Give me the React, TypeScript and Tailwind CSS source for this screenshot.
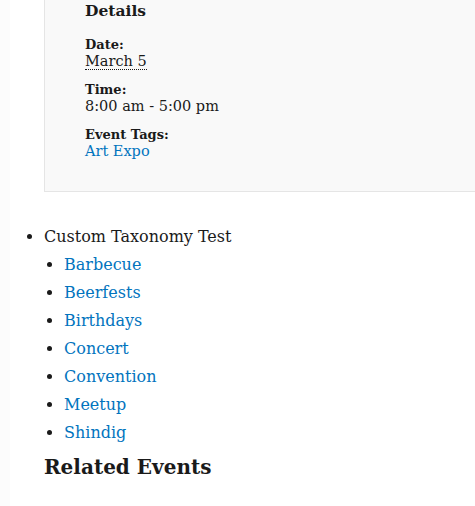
const tags = ["Barbecue", "Beerfests", "Birthdays", "Concert", "Convention", "Meetup", "Shindig"];

export default function App() {
  return (
    <div
      className="flex min-h-[506px] w-[475px] overflow-hidden bg-white text-[#1a1a1a]"
      style={{ fontFamily: '"DejaVu Serif", "Liberation Serif", serif' }}
    >
      <div className="w-[10px] shrink-0 bg-[#fcfcfc]" />
      <div className="flex-1 pl-[34px]">
        {/* event details box */}
        <div className="border-b border-l border-[#e5e5e5] bg-[#f9f9f9] pb-[31px] pl-[40px] pt-[1px]">
          <h3 className="text-[15.5px] font-bold leading-[20px]">Details</h3>
          <dl className="mt-[15px] text-[14.5px] leading-[17px]">
            <dt className="text-[13px] font-bold">Date:</dt>
            <dd>
              <abbr className="border-b border-dotted border-[#1a1a1a] no-underline">March 5</abbr>
            </dd>
            <dt className="mt-[11px] text-[13px] font-bold">Time:</dt>
            <dd>8:00 am - 5:00 pm</dd>
            <dt className="mt-[11px] text-[13px] font-bold">Event Tags:</dt>
            <dd>
              <a className="text-[#0274be]" href="#">Art Expo</a>
            </dd>
          </dl>
        </div>

        <ul className="mt-[31px] list-disc text-[16px] leading-[28px]">
          <li>
            Custom Taxonomy Test
            <ul className="ml-[20px] list-disc">
              {tags.map((t) => (
                <li key={t}>
                  <a className="text-[#0274be]" href="#">{t}</a>
                </li>
              ))}
            </ul>
          </li>
        </ul>
        <h2 className="mt-[7px] text-[20px] font-bold leading-[26px]">Related Events</h2>
      </div>
    </div>
  );
}
